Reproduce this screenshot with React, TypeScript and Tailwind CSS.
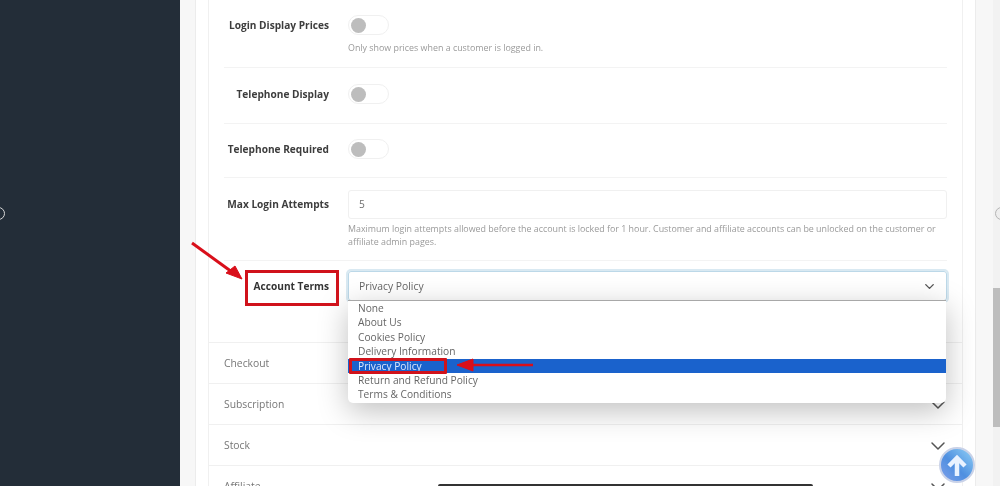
import { ChevronDown } from "lucide-react";

const TERMS = [
  "None",
  "About Us",
  "Cookies Policy",
  "Delivery Information",
  "Privacy Policy",
  "Return and Refund Policy",
  "Terms & Conditions",
];

const SECTIONS = ["Checkout", "Subscription", "Stock", "Affiliate"];

function Toggle() {
  return (
    <div className="flex h-[20px] w-[41px] items-center rounded-full border border-[#f0f0f0] bg-white pl-[2px]">
      <div className="h-[15px] w-[15px] rounded-full bg-[#bdbdbd]" />
    </div>
  );
}

function Label({ text, className }: { text: string; className: string }) {
  return (
    <div className={`w-[105px] shrink-0 text-right text-[10.15px] leading-[20px] font-bold text-[#3d3d3d] ${className}`}>
      {text}
    </div>
  );
}

export default function App() {
  return (
    <div className="relative flex h-[486px] w-[1000px] overflow-hidden bg-[#f7f7f7] font-['Open_Sans','Noto_Sans',sans-serif] blur-[0.35px]">
      <aside className="relative w-[180px] shrink-0 bg-[#232d38]">
        <div className="absolute top-[207px] left-[-8px] h-[13px] w-[13px] rounded-full border border-[#d8d8d8]" />
      </aside>

      <main className="flex-1 pl-[15px]">
        <div className="h-[486px] w-[781px] border-x border-[#ececec] bg-white px-[12px]">
          <div className="h-[486px] overflow-hidden border-x border-[#f0f0f0]">
            <div className="px-[15px]">
              <div className="flex h-[68px] gap-[19px] border-b border-[#f3f3f3] pt-[15px]">
                <Label text="Login Display Prices" className="" />
                <div>
                  <Toggle />
                  <p className="mt-[6px] text-[8.9px] leading-[13px] text-[#9a9a9a]">
                    Only show prices when a customer is logged in.
                  </p>
                </div>
              </div>
              <div className="flex h-[56px] gap-[19px] border-b border-[#f3f3f3] pt-[16px]">
                <Label text="Telephone Display" className="" />
                <Toggle />
              </div>
              <div className="flex h-[54px] gap-[19px] border-b border-[#f3f3f3] pt-[15px]">
                <Label text="Telephone Required" className="" />
                <Toggle />
              </div>
              <div className="flex h-[83px] gap-[19px] border-b border-[#f3f3f3] pt-[12px]">
                <Label text="Max Login Attempts" className="pt-[4px]" />
                <div className="min-w-0 flex-1">
                  <div className="flex h-[29px] items-center rounded-[3px] border border-[#f0f0f0] pl-[10px] text-[10.2px] text-[#6f6f6f]">
                    5
                  </div>
                  <p className="mt-[3px] text-[8.9px] leading-[13px] text-[#9a9a9a]">
                    Maximum login attempts allowed before the account is locked for 1 hour. Customer and affiliate accounts can be unlocked on the customer or affiliate admin pages.
                  </p>
                </div>
              </div>
              <div className="flex h-[81px] gap-[19px] pt-[10px]">
                <Label text="Account Terms" className="pt-[5px] text-[#333333]" />
                <div className="flex h-[30px] flex-1 items-center justify-between rounded-[3px] border border-[#bcd8e8] pt-[1px] pr-[9px] pl-[10px] text-[10.35px] text-[#666666] shadow-[0_0_0_2px_#d9e9f2]">
                  Privacy Policy
                  <ChevronDown size={15} strokeWidth={2.2} className="text-[#555555]" />
                </div>
              </div>
            </div>

            {SECTIONS.map((label) => (
              <div
                key={label}
                className="flex h-[41px] items-center justify-between border-t border-[#f0f0f0] pt-[1px] pr-[12px] pl-[15px] text-[10.35px] text-[#777777]"
              >
                {label}
                <ChevronDown size={24} strokeWidth={1.5} className="text-[#555555]" />
              </div>
            ))}
          </div>
        </div>
      </main>

      {/* open select list */}
      <ul className="absolute top-[300px] left-[348px] w-[598px] rounded-b-[5px] border-t border-[#a8a8a8] bg-white pb-[1px] text-[10.2px] leading-[14.4px] text-[#666666] shadow-[0_8px_30px_rgba(0,0,0,0.25)]">
        {TERMS.map((t) => (
          <li key={t} className={`pl-[10px] ${t === "Privacy Policy" ? "bg-[#1a62cc] text-[#dfe9fb]" : ""}`}>
            {t}
          </li>
        ))}
      </ul>

      {/* scrollbar */}
      <div className="absolute top-0 right-0 h-full w-[7px] bg-[#f2f2f2]" />
      <div className="absolute top-[288px] right-0 h-[139px] w-[7px] bg-[#bdbdbd]" />
      <div className="absolute top-[207px] right-[-8px] h-[13px] w-[13px] rounded-full border border-[#b5b5b5] bg-[#eeeeee]" />

      {/* annotations */}
      <div className="absolute top-[270px] left-[245px] h-[36px] w-[94px] border-[3px] border-[#d0121b]" />
      <div className="absolute top-[358px] left-[349px] h-[16px] w-[98px] rounded-[1px] border-[3px] border-[#d0121b]" />
      <svg className="absolute inset-0" width={1000} height={486} fill="#d90f1a" stroke="#d90f1a">
        <line x1={192} y1={243} x2={232} y2={272} strokeWidth={3} />
        <polygon points="242,279 226,273 235,266" />
        <line x1={470} y1={365} x2={533} y2={365} strokeWidth={2.5} />
        <polygon points="457,365 473,359 473,371" />
      </svg>

      {/* back to top */}
      <div className="absolute top-[447px] left-[939px] flex h-[36px] w-[36px] items-center justify-center rounded-full border-2 border-[#c9d2e8] bg-[linear-gradient(45deg,#7e9fea,#4f8fe0_45%,#8fd0f6)]">
        <svg width={24} height={24} viewBox="0 0 24 24" fill="none" stroke="#e9f2ff" strokeWidth={4.5}>
          <path d="M4 13 L12 5 L20 13" />
          <path d="M12 6 V23" />
        </svg>
      </div>

      {/* video bar peeking from the bottom */}
      <div className="absolute top-[484px] left-[438px] h-[2px] w-[375px] rounded-t-[3px] bg-[#333333]" />
    </div>
  );
}
